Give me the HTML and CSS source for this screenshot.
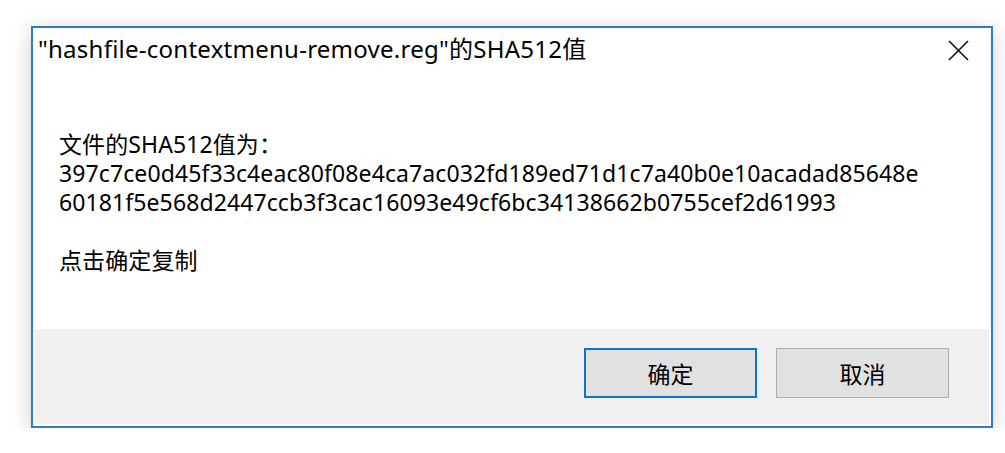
FILE: index.html
```html
<!DOCTYPE html>
<html lang="zh-CN">
<head>
<meta charset="utf-8">
<title>SHA512</title>
<link rel="stylesheet" href="styles.css">
</head>
<body>
<div class="window">
  <div class="titlebar">
    <div class="title">"hashfile-contextmenu-remove.reg"的SHA512值</div>
    <div class="close">
      <svg width="21" height="21" viewBox="0 0 21 21"><path d="M1 1L20 20M20 1L1 20" stroke="#111" stroke-width="1.6" fill="none"/></svg>
    </div>
  </div>
  <div class="content">
    <div class="line">文件的SHA512值为：</div>
    <div class="line">397c7ce0d45f33c4eac80f08e4ca7ac032fd189ed71d1c7a40b0e10acadad85648e</div>
    <div class="line">60181f5e568d2447ccb3f3cac16093e49cf6bc34138662b0755cef2d61993</div>
    <div class="line blank">&nbsp;</div>
    <div class="line">点击确定复制</div>
  </div>
  <div class="footer">
    <button class="btn btn-default">确定</button>
    <button class="btn">取消</button>
  </div>
</div>
</body>
</html>
```

FILE: styles.css
```css
html, body {
  margin: 0;
  padding: 0;
  background: #ffffff;
}
body {
  font-family: "Noto Sans", "Noto Sans CJK SC", sans-serif;
  color: #000;
  padding: 26px 0 0 31px;
}
.window {
  width: 958px;
  height: 398px;
  border: 2px solid #2f7bc4;
  background: #fff;
  box-shadow: 0 5px 20px rgba(0,0,0,0.2);
  display: flex;
  flex-direction: column;
}
.titlebar {
  height: 46px;
  display: flex;
  align-items: center;
  justify-content: space-between;
  padding: 0 22px 0 5px;
}
.title {
  font-size: 24px;
  letter-spacing: 0.25px;
  line-height: 28px;
  margin-top: -5px;
  white-space: nowrap;
}
.close {
  width: 21px;
  height: 21px;
  display: flex;
  margin-top: -2px;
}
.content {
  flex: 1;
  padding: 56px 0 0 26px;
  font-size: 23px;
  letter-spacing: 0.1px;
  line-height: 29px;
}
.line {
  white-space: nowrap;
}
.footer {
  height: 95px;
  margin: 0 2px 2px 2px;
  background: #f0f0f0;
  display: flex;
  justify-content: flex-end;
  align-items: flex-start;
  gap: 19px;
  padding: 19px 40px 0 0;
  box-sizing: border-box;
}
.btn {
  width: 173px;
  height: 50px;
  background: #e1e1e1;
  border: 1px solid #adadad;
  font-family: "Noto Sans CJK SC", sans-serif;
  font-size: 23px;
  color: #000;
  padding: 0;
  margin: 0;
}
.btn-default {
  border: 2px solid #0b73d0;
}
```
